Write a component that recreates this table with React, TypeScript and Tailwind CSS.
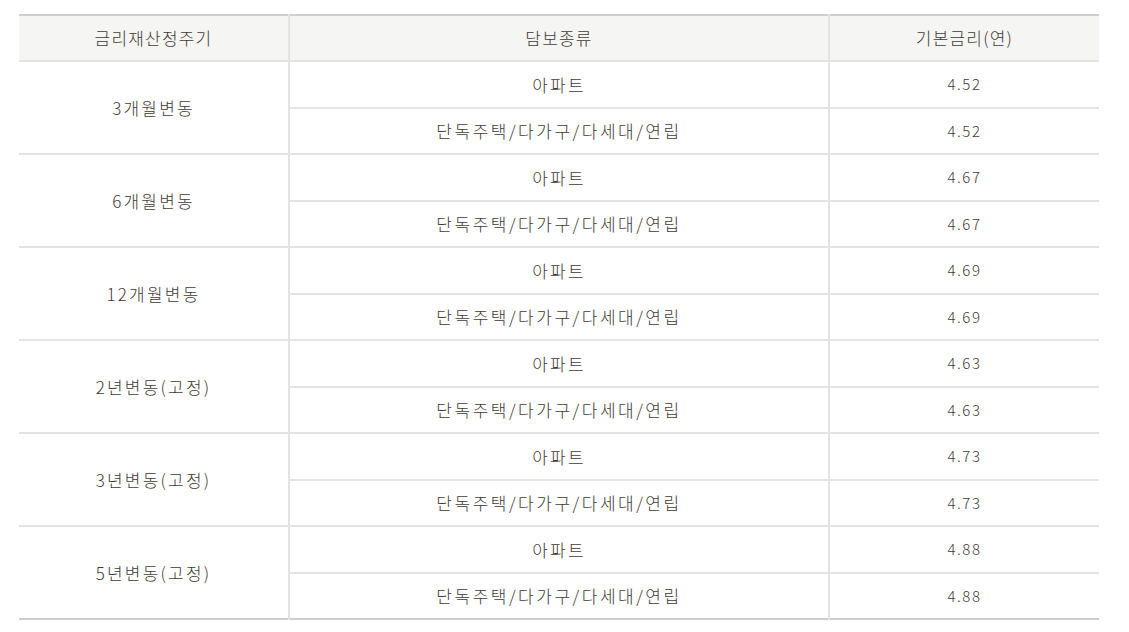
const rates = [
  { period: '3개월변동', apt: '4.52', house: '4.52' },
  { period: '6개월변동', apt: '4.67', house: '4.67' },
  { period: '12개월변동', apt: '4.69', house: '4.69' },
  { period: '2년변동(고정)', apt: '4.63', house: '4.63' },
  { period: '3년변동(고정)', apt: '4.73', house: '4.73' },
  { period: '5년변동(고정)', apt: '4.88', house: '4.88' },
];

const font = { fontFamily: '"Noto Sans CJK KR", "Noto Sans", sans-serif' };

export default function App() {
  return (
    <div className="min-h-screen bg-white pt-[14px] pl-[19px]" style={font}>
      <table className="w-[1080px] table-fixed border-collapse border-t-2 border-b-2 border-t-[#cfcfcf] border-b-[#cdcdcd] text-[17px] font-light tracking-[2.2px] text-[#3f3a35]">
        <colgroup>
          <col className="w-[270px]" />
          <col className="w-[540px]" />
          <col className="w-[270px]" />
        </colgroup>
        <thead>
          <tr className="h-[46px] bg-[#f5f5f3] tracking-[1.2px]">
            <th className="border-b-2 border-r-2 border-[#e3e3e3] text-center font-light">금리재산정주기</th>
            <th className="border-b-2 border-r-2 border-[#e3e3e3] text-center font-light">담보종류</th>
            <th className="border-b-2 border-[#e3e3e3] text-center font-light">기본금리(연)</th>
          </tr>
        </thead>
        <tbody>
          {rates.map((r, i) => {
            const last = i === rates.length - 1;
            return [
              <tr key={r.period + 'a'} className="h-[46.5px]">
                <td
                  rowSpan={2}
                  className={`border-r-2 border-[#e3e3e3] text-center ${last ? '' : 'border-b-2'}`}
                >
                  {r.period}
                </td>
                <td className="border-b-2 border-r-2 border-[#e3e3e3] text-center">아파트</td>
                <td className="border-b-2 border-[#e3e3e3] text-center text-[15px] tracking-[1.5px]">{r.apt}</td>
              </tr>,
              <tr key={r.period + 'b'} className="h-[46.5px]">
                <td className={`border-r-2 border-[#e3e3e3] text-center tracking-[2.5px] ${last ? '' : 'border-b-2'}`}>
                  단독주택/다가구/다세대/연립
                </td>
                <td className={`border-[#e3e3e3] text-center text-[15px] tracking-[1.5px] ${last ? '' : 'border-b-2'}`}>
                  {r.house}
                </td>
              </tr>,
            ];
          })}
        </tbody>
      </table>
    </div>
  );
}
